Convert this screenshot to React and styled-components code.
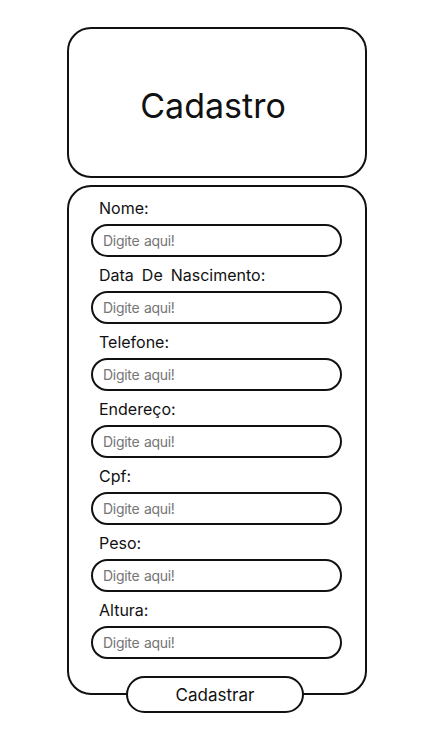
import React from "react";
import styled, { createGlobalStyle } from "styled-components";

const GlobalStyle = createGlobalStyle`
  body {
    margin: 0;
    background: #fff;
    font-family: Inter, "Noto Sans", sans-serif;
    color: #111;
  }
`;

const fields = [
  "Nome:",
  "Data De Nascimento:",
  "Telefone:",
  "Endereço:",
  "Cpf:",
  "Peso:",
  "Altura:",
];

const App = () => {
  return (
    <>
      <GlobalStyle />
      <Container>
        <Header>
          <Title>Cadastro</Title>
        </Header>

        <Form>
          {fields.map((label) => (
            <Field key={label}>
              <Label>{label}</Label>
              <Input placeholder="Digite aqui!" />
            </Field>
          ))}
        </Form>

        <Button>Cadastrar</Button>
      </Container>
    </>
  );
};

export default App;

const Container = styled.div`
  width: 300px;
  padding: 27px 0 0 67px;
  display: flex;
  flex-direction: column;
`;

const Header = styled.div`
  height: 151px;
  box-sizing: border-box;
  border: 2px solid #111;
  border-radius: 24px;
  padding-top: 6px;
  display: flex;
  justify-content: center;
  align-items: center;
`;

const Title = styled.h1`
  margin: 0 8px 0 0;
  font-size: 34px;
  font-weight: 400;
  color: #111;
`;

const Form = styled.div`
  margin-top: 7px;
  box-sizing: border-box;
  border: 2px solid #111;
  border-radius: 24px;
  padding: 12px 24px 34px 22px;
  display: flex;
  flex-direction: column;
  gap: 9px;
`;

const Field = styled.div`
  display: flex;
  flex-direction: column;
  gap: 6px;
`;

const Label = styled.label`
  padding-left: 8px;
  font-size: 16px;
  line-height: 19px;
  word-spacing: 3.5px;
  color: #111;
`;

const Input = styled.input`
  width: 251px;
  height: 33px;
  box-sizing: border-box;
  border: 2px solid #111;
  border-radius: 17px;
  padding: 0 10px;
  outline: none;
  font-family: Inter, "Noto Sans", sans-serif;
  font-size: 14px;
  letter-spacing: -0.3px;
  word-spacing: 1px;
  background: #fff;

  ::placeholder {
    color: #9a9a9a;
  }
`;

const Button = styled.div`
  position: relative;
  z-index: 1;
  align-self: center;
  margin: -19px 0 0 -4px;
  width: 178px;
  height: 37px;
  box-sizing: border-box;
  border: 2px solid #111;
  border-radius: 19px;
  background: #fff;
  display: flex;
  justify-content: center;
  align-items: center;
  font-size: 17px;
  cursor: pointer;
`;
